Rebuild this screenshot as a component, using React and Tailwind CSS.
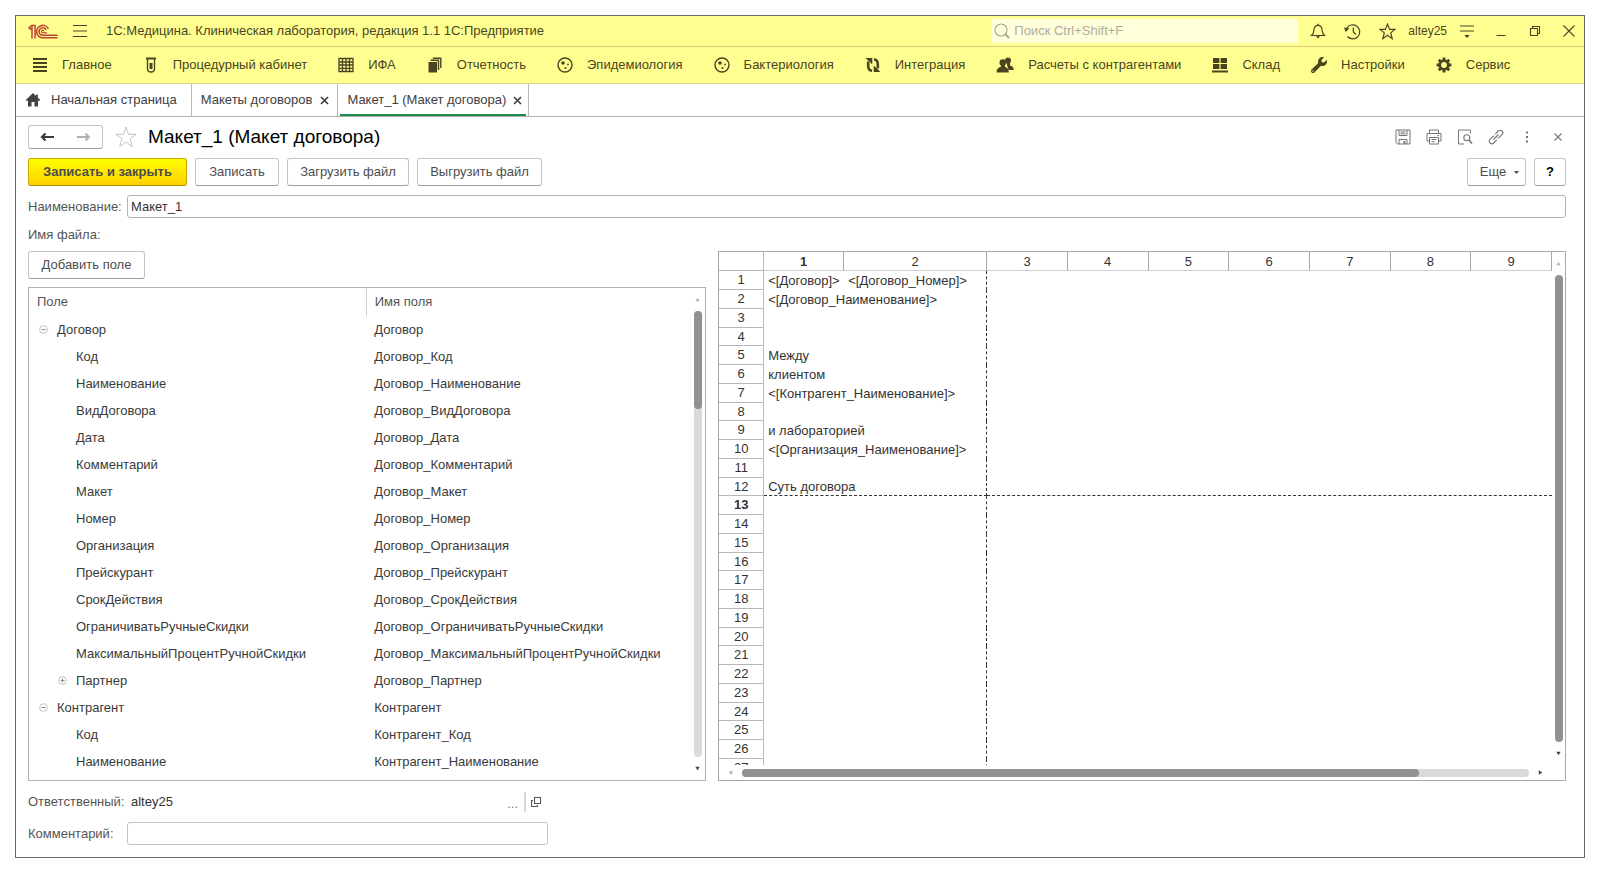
import React from "react";
import { FaWrench } from "react-icons/fa";

function Icon({ children, className = "size-4", box = "0 0 16 16" }) {
  return (
    <svg viewBox={box} className={"shrink-0 " + className} fill="none" stroke="currentColor" aria-hidden="true">
      {children}
    </svg>
  );
}

const Logo = () => (
  <svg viewBox="0 0 30 15" className="h-[15px] w-[30px] shrink-0 text-[#bf4430]" fill="none" stroke="currentColor" aria-label="1С">
    <path d="M0.4 4.4 L3.6 1.4 H7 V14.5 M1.6 5.6 L4 3.8 V14.5" strokeWidth="1.5" />
    <path d="M20.4 5 A6.2 6.2 0 1 0 15 13.8 H29.5" strokeWidth="1.6" />
    <path d="M18 5.8 A3.7 3.7 0 1 0 15 11.3 H29.5" strokeWidth="1.5" />
    <path d="M16 7 A1.3 1.3 0 1 0 15 8.9 H19" strokeWidth="1.2" />
  </svg>
);

const Burger = () => (
  <Icon><path d="M1 2.5H15M1 8H15M1 13.5H15" strokeWidth="1.2" /></Icon>
);
const Home = () => (
  <Icon>
    <path d="M8 1L0.8 8L2 9.2L3 8.3V14.5H6.5V10H9.5V14.5H13V8.3L14 9.2L15.2 8L12.8 5.6V2.5H11V3.9Z" fill="currentColor" stroke="none" />
  </Icon>
);
const Lines = () => (
  <Icon><path d="M1 2H15M1 6H15M1 10H15M1 14H15" strokeWidth="2" /></Icon>
);
const Tube = () => (
  <Icon>
    <path d="M3 1.5H13" strokeWidth="2" />
    <path d="M4.5 2V12A3.5 3 0 0 0 11.5 12V2" strokeWidth="1.4" />
    <path d="M6.5 6H9.5V12H6.5Z" fill="currentColor" stroke="none" />
  </Icon>
);
const GridIcon = () => (
  <Icon>
    <path d="M1 1.5H15V14.5H1ZM4.5 1V15M8 1V15M11.5 1V15M1 5H15M1 8H15M1 11.3H15" strokeWidth="1.3" />
  </Icon>
);
const Books = () => (
  <Icon>
    <path d="M1.5 5H10V15.5H1.5Z" fill="currentColor" stroke="none" />
    <path d="M3.5 3.3H11.5V13M5.8 1.3H13.8V11" strokeWidth="1.4" />
  </Icon>
);
const Petri = () => (
  <Icon>
    <circle cx="8" cy="8" r="7" strokeWidth="1.4" />
    <circle cx="6" cy="6" r="1.8" fill="currentColor" stroke="none" />
    <circle cx="11" cy="7.5" r="0.9" fill="currentColor" stroke="none" />
    <circle cx="8.5" cy="11" r="1" fill="currentColor" stroke="none" />
  </Icon>
);
const Sync = () => (
  <Icon>
    <path d="M7 13.8Q3.2 13.2 3.2 9V4.5M9 2.2Q12.8 2.8 12.8 7V11.5" strokeWidth="2.6" />
    <path d="M0.5 1H7.3V7.5ZM15.5 15H8.7V8.5Z" fill="currentColor" stroke="none" />
  </Icon>
);
const People = () => (
  <Icon className="h-4 w-[18px]" box="0 0 18 16">
    <g fill="currentColor" stroke="none">
      <circle cx="12" cy="3.4" r="3" />
      <path d="M10.5 6H14V8.5Q17.7 9 17.7 13H12.5Z" />
      <circle cx="6.8" cy="5.6" r="3.3" />
      <path d="M0.5 15.5Q0.5 10.5 4.8 10V8H9V10Q12.8 10.5 12.8 15.5Z" />
    </g>
  </Icon>
);
const Blocks = () => (
  <Icon>
    <path d="M1 1H7.4V6H1ZM8.6 1H15V6H8.6ZM1 7H7.4V12H1ZM8.6 7H15V12H8.6ZM0 13.5H16V15.5H0Z" fill="currentColor" stroke="none" />
  </Icon>
);
const Gear = () => (
  <Icon>
    <circle cx="8" cy="8" r="4.3" strokeWidth="2.8" />
    <path d="M8 0.6V3M8 13V15.4M0.6 8H3M13 8H15.4M2.8 2.8L4.4 4.4M11.6 11.6L13.2 13.2M13.2 2.8L11.6 4.4M4.4 11.6L2.8 13.2" strokeWidth="2.8" />
  </Icon>
);
const Wrench = () => <FaWrench className="size-4 shrink-0" />;

const NAV = [
  ["Главное", Lines],
  ["Процедурный кабинет", Tube],
  ["ИФА", GridIcon],
  ["Отчетность", Books],
  ["Эпидемиология", Petri],
  ["Бактериология", Petri],
  ["Интеграция", Sync],
  ["Расчеты с контрагентами", People],
  ["Склад", Blocks],
  ["Настройки", Wrench],
  ["Сервис", Gear],
];

const FIELDS = [
  [0, "-", "Договор", "Договор"],
  [1, "", "Код", "Договор_Код"],
  [1, "", "Наименование", "Договор_Наименование"],
  [1, "", "ВидДоговора", "Договор_ВидДоговора"],
  [1, "", "Дата", "Договор_Дата"],
  [1, "", "Комментарий", "Договор_Комментарий"],
  [1, "", "Макет", "Договор_Макет"],
  [1, "", "Номер", "Договор_Номер"],
  [1, "", "Организация", "Договор_Организация"],
  [1, "", "Прейскурант", "Договор_Прейскурант"],
  [1, "", "СрокДействия", "Договор_СрокДействия"],
  [1, "", "ОграничиватьРучныеСкидки", "Договор_ОграничиватьРучныеСкидки"],
  [1, "", "МаксимальныйПроцентРучнойСкидки", "Договор_МаксимальныйПроцентРучнойСкидки"],
  [1, "+", "Партнер", "Договор_Партнер"],
  [0, "-", "Контрагент", "Контрагент"],
  [1, "", "Код", "Контрагент_Код"],
  [1, "", "Наименование", "Контрагент_Наименование"],
];

const CELLS = {
  1: ["<[Договор]>", "<[Договор_Номер]>"],
  2: ["<[Договор_Наименование]>"],
  5: ["Между"],
  6: ["клиентом"],
  7: ["<[Контрагент_Наименование]>"],
  9: ["и лабораторией"],
  10: ["<[Организация_Наименование]>"],
  12: ["Суть договора"],
};
const ROWS = Array.from({ length: 27 }, (_, i) => i + 1);

function Toggle({ sign }) {
  return (
    <button type="button" aria-label={sign === "+" ? "Развернуть" : "Свернуть"} className="shrink-0 text-[#8a8a8a]">
      <Icon className="size-[9px]" box="0 0 9 9">
        <circle cx="4.5" cy="4.5" r="3.9" strokeWidth="0.5" />
        <path d={sign === "+" ? "M2.5 4.5H6.5M4.5 2.5V6.5" : "M2.5 4.5H6.5"} strokeWidth="1" />
      </Icon>
    </button>
  );
}

function Arrow({ dir, faint }) {
  const d = { up: "M4 2L6.5 6H1.5Z", down: "M1.5 2H6.5L4 6Z", left: "M6 1.5V6.5L2 4Z", right: "M2 1.5V6.5L6 4Z" }[dir];
  return (
    <svg viewBox="0 0 8 8" aria-hidden="true" className={"size-[7px] shrink-0 " + (faint ? "text-[#b5b5b5]" : "text-[#444]")}>
      <path d={d} fill="currentColor" />
    </svg>
  );
}

function Btn({ children, className = "", ...rest }) {
  return (
    <button
      type="button"
      className={"flex h-7 shrink-0 items-center justify-center rounded-[3px] border border-[#c4c4c4] border-b-[#a0a0a0] bg-white whitespace-nowrap text-[#4d4d4d] " + className}
      {...rest}
    >
      {children}
    </button>
  );
}

function TitleBar() {
  return (
    <header className="flex h-[31px] shrink-0 items-center border-b border-[#dcc878] bg-[#ffff91] pr-[7px] pl-3 text-[#4a4420]">
      <Logo />
      <button type="button" aria-label="Меню" className="ml-3.5"><Burger /></button>
      <h1 className="ml-[18px] text-[13px] whitespace-nowrap">1С:Медицина. Клиническая лаборатория, редакция 1.1 1С:Предприятие</h1>
      <label className="ml-auto flex h-6 w-[306px] items-center gap-1 bg-[#ffffdc] px-0.5 text-[#a8a294]">
        <Icon><circle cx="7" cy="7" r="6" strokeWidth="1.1" /><path d="M11.5 11.5L15 15" strokeWidth="1.8" /></Icon>
        <input aria-label="Поиск" placeholder="Поиск Ctrl+Shift+F" className="min-w-0 flex-1 bg-transparent text-[13px] outline-none placeholder:text-[#b3ab9c]" />
      </label>
      <div className="ml-3 flex items-center gap-[18px]">
        <button type="button" aria-label="Уведомления">
          <Icon><path d="M1.5 12.5H14.5C12 10.5 12.3 8.5 12 6.5C11.6 3.6 10 2.4 8 2.4S4.4 3.6 4 6.5C3.7 8.5 4 10.5 1.5 12.5Z" strokeWidth="1.2" /><path d="M8 0.8V2.4" strokeWidth="1.4" /><path d="M5.8 13.2H10.2L8 15.6Z" fill="currentColor" stroke="none" /></Icon>
        </button>
        <button type="button" aria-label="История">
          <Icon className="size-[17px]" box="0 0 17 17"><path d="M2.6 5.5A7 7 0 1 1 3.5 13.5" strokeWidth="1.2" /><path d="M9.3 4.5V9L12 11.5" strokeWidth="1.2" /><path d="M0 4.5L5.3 5.2L1.8 9Z" fill="currentColor" stroke="none" /></Icon>
        </button>
        <button type="button" aria-label="Избранное">
          <Icon className="size-[17px]"><path d="M8 1L10 6H15L11 9.3L12.5 14.8L8 11.6L3.5 14.8L5 9.3L1 6H6Z" strokeWidth="1.1" /></Icon>
        </button>
      </div>
      <span className="ml-3 text-xs">altey25</span>
      <div className="ml-3 flex items-center gap-[18px]">
        <button type="button" aria-label="Настройки окна"><Icon><path d="M1 3H15M1 8H15" strokeWidth="1.2" /><path d="M5.3 12H10.7L8 15Z" fill="currentColor" stroke="none" /></Icon></button>
        <button type="button" aria-label="Свернуть окно"><Icon><path d="M3.5 12.5H12.5" strokeWidth="1.1" /></Icon></button>
        <button type="button" aria-label="Восстановить окно"><Icon><path d="M3.5 5.5H10.5V12.5H3.5ZM5.5 5V3.5H12.5V10.5H11" strokeWidth="1.1" /></Icon></button>
        <button type="button" aria-label="Закрыть окно"><Icon><path d="M2.5 2.5L13.5 13.5M13.5 2.5L2.5 13.5" strokeWidth="1.1" /></Icon></button>
      </div>
    </header>
  );
}

function NavBar() {
  return (
    <nav className="flex h-[37px] shrink-0 items-center gap-[31px] overflow-hidden border-b border-[#d9d48c] bg-[#ffff91] px-4 text-[13px] text-[#4a4420]">
      {NAV.map(([label, Glyph]) => (
        <a key={label} href="#" className="flex items-center gap-3.5 whitespace-nowrap">
          <Glyph />
          {label}
        </a>
      ))}
    </nav>
  );
}

const CloseX = () => (
  <Icon className="size-[9px]" box="0 0 9 9"><path d="M1 1L8 8M8 1L1 8" strokeWidth="1.7" /></Icon>
);

function Tabs() {
  return (
    <div className="flex h-[33px] shrink-0 border-b border-[#b0b0b0] text-[13px] whitespace-nowrap text-[#404040]">
      <a href="#" className="flex items-center gap-2.5 border-r border-[#b8b8b8] pr-3.5 pl-[9px]">
        <Home />
        Начальная страница
      </a>
      <div className="flex items-center gap-2 border-r border-[#b8b8b8] pr-2 pl-[9px]">
        <a href="#">Макеты договоров</a>
        <button type="button" aria-label="Закрыть Макеты договоров"><CloseX /></button>
      </div>
      <div className="flex border-r border-[#b8b8b8] px-0.5">
        <div className="flex items-center gap-[7px] border-b-2 border-[#1c8a4c] pt-0.5 pr-1 pl-[7px]">
          <a href="#" aria-current="page">Макет_1 (Макет договора)</a>
          <button type="button" aria-label="Закрыть Макет_1"><CloseX /></button>
        </div>
      </div>
    </div>
  );
}

function Heading() {
  return (
    <div className="flex h-6 items-center">
      <div className="flex h-6 w-[75px] shrink-0 rounded-[3px] border border-[#c4c4c4] border-b-[#a0a0a0]">
        <button type="button" aria-label="Назад" className="flex flex-1 items-center justify-center text-[#3c3c3c]">
          <Icon><path d="M15 8H3M6.5 4.5L3 8L6.5 11.5" strokeWidth="2.2" /></Icon>
        </button>
        <button type="button" aria-label="Вперед" className="flex flex-1 items-center justify-center text-[#b0b0b0]">
          <Icon><path d="M1 8H13M9.5 4.5L13 8L9.5 11.5" strokeWidth="1.8" /></Icon>
        </button>
      </div>
      <button type="button" aria-label="В избранное" className="ml-3 text-[#b4b4b4]">
        <Icon className="size-[22px]" box="0 0 22 22"><path d="M11 1L13.6 8.3H21L15.1 12.8L17.3 20.5L11 16L4.7 20.5L6.9 12.8L1 8.3H8.4Z" strokeWidth="0.8" /></Icon>
      </button>
      <h2 className="ml-[11px] text-[19px] leading-6 whitespace-nowrap text-black">Макет_1 (Макет договора)</h2>
      <div className="ml-auto flex items-center gap-[15px] text-[#767676]">
        <button type="button" aria-label="Сохранить">
          <Icon><path d="M1 1H15V15H2.5L1 13.5ZM4 1V6.5H12V1M5.5 3H10.5M5.5 4.8H10.5M4 15V10.5H12V15" strokeWidth="1" /><path d="M8.5 12H10.5V15H8.5Z" fill="currentColor" stroke="none" /></Icon>
        </button>
        <button type="button" aria-label="Печать">
          <Icon><path d="M3.5 4.5V1H12.5V4.5M3.5 12H1V4.5H15V12H12.5M3.5 8.5H12.5V15H3.5ZM5.5 10.5H10.5M5.5 12.8H8.5M11.5 6.5H13" strokeWidth="1" /></Icon>
        </button>
        <button type="button" aria-label="Предварительный просмотр">
          <Icon><path d="M7 15H1.5V1H13.5V4.5" strokeWidth="1" /><circle cx="9.8" cy="8.8" r="3" strokeWidth="1.1" /><path d="M12 11L15 14.5" strokeWidth="1.7" /></Icon>
        </button>
        <button type="button" aria-label="Ссылка">
          <Icon><path d="M5.5 10.5L10.5 5.5M7.2 5.2L10.3 2A2.6 2.6 0 0 1 14 5.7L11.5 8.2A2.6 2.6 0 0 1 9.5 9M8.8 10.8L5.7 14A2.6 2.6 0 0 1 2 10.3L4.5 7.8A2.6 2.6 0 0 1 6.5 7" strokeWidth="1.1" /></Icon>
        </button>
        <button type="button" aria-label="Действия">
          <Icon><path d="M7 2.5H9V4.5H7ZM7 7H9V9H7ZM7 11.5H9V13.5H7Z" fill="currentColor" stroke="none" /></Icon>
        </button>
        <button type="button" aria-label="Закрыть">
          <Icon><path d="M4.5 4.5L11.5 11.5M11.5 4.5L4.5 11.5" strokeWidth="1.1" /></Icon>
        </button>
      </div>
    </div>
  );
}

function FieldTree() {
  return (
    <section className="flex min-h-0 flex-1 border border-[#b0b0b0]">
      <div className="min-w-0 flex-1 overflow-hidden">
        <table className="w-full table-fixed text-left whitespace-nowrap text-[#3a3a3a]">
          <thead className="text-[#555]">
            <tr className="h-7">
              <th className="w-[51%] border-r border-[#d0d0d0] pl-2 font-normal">Поле</th>
              <th className="w-[49%] pl-2 font-normal">Имя поля</th>
            </tr>
          </thead>
          <tbody>
            {FIELDS.map(([level, sign, name, full], i) => (
              <tr key={i} className="h-[27px]">
                <td className={level ? "pl-[29px]" : "pl-2.5"}>
                  <div className={"flex items-center " + (sign ? "gap-[9px]" : "pl-[18px]")}>
                    {sign && <Toggle sign={sign} />}
                    {name}
                  </div>
                </td>
                <td className="pl-2">{full}</td>
              </tr>
            ))}
          </tbody>
        </table>
      </div>
      <div className="flex w-[15px] flex-col items-center pt-2 pb-2">
        <Arrow dir="up" faint />
        <div className="my-2 w-2 flex-1 rounded-full bg-[#dadada]">
          <div className="h-[22%] rounded-full bg-[#919191]" />
        </div>
        <Arrow dir="down" />
      </div>
    </section>
  );
}

function Sheet() {
  return (
    <section className="flex min-h-0 min-w-0 flex-col border border-[#a8a8a8]">
      <div className="flex min-h-0 flex-1">
        <div className="min-w-0 flex-1 overflow-hidden">
          <table className="w-full table-fixed border-separate border-spacing-0 whitespace-nowrap text-[#333]">
            <colgroup>
              <col className="w-[45px]" />
              <col className="w-[80px]" />
              <col className="w-[143px]" />
              <col /><col /><col /><col /><col /><col /><col />
            </colgroup>
            <thead>
              <tr className="h-[19px]">
                <th className="border-r border-b border-[#b8b8b8]" aria-label="Строка" />
                {[1, 2, 3, 4, 5, 6, 7, 8, 9].map((c) => (
                  <th key={c} className={"border-r border-b border-r-[#a8a8a8] border-b-[#cfcfcf] p-0 pt-0.5 text-[13px] leading-4 " + (c === 1 ? "font-bold" : "font-normal")}>{c}</th>
                ))}
              </tr>
            </thead>
            <tbody>
              {ROWS.map((r) => {
                const text = CELLS[r] || [];
                const line = r === 12 ? " border-b border-dashed border-b-[#333]" : "";
                return (
                  <tr key={r} className={r % 4 === 0 ? "h-[18px]" : "h-[19px]"}>
                    <th className={"border-r border-b border-[#b8b8b8] p-0 text-[13px] leading-4 " + (r === 13 ? "font-bold" : "font-normal")}>{r}</th>
                    <td className={"p-0 pl-1 text-[13px] leading-4" + line}>{text[0]}</td>
                    <td className={"border-r border-dashed border-r-[#333] p-0 pl-1 text-[13px] leading-4" + line}>{text[1]}</td>
                    <td colSpan={7} className={"p-0" + line} />
                  </tr>
                );
              })}
            </tbody>
          </table>
        </div>
        <div className="flex w-[13px] flex-col items-center pt-2">
          <Arrow dir="up" faint />
          <div className="my-2 w-2 flex-1 rounded-full bg-[#919191]" />
          <Arrow dir="down" />
          <div className="h-2" />
        </div>
      </div>
      <div className="flex h-[15px] items-center pr-[21px] pl-2">
        <Arrow dir="left" faint />
        <div className="mx-2 h-2 flex-1 rounded-full bg-[#dadada]">
          <div className="h-full w-[86%] rounded-full bg-[#919191]" />
        </div>
        <Arrow dir="right" />
      </div>
    </section>
  );
}

export default function App() {
  return (
    <div className="h-screen bg-white p-[15px] font-['Liberation_Sans',Arial,sans-serif] text-[13px] leading-4">
      <div className="flex h-full flex-col border border-[#6a6a6a] bg-white">
        <TitleBar />
        <NavBar />
        <Tabs />
        <main className="flex min-h-0 flex-1 flex-col pt-2 pr-[18px] pb-3 pl-3">
          <Heading />
          <div className="mt-[9px] flex gap-2">
            <Btn className="w-[159px] border-[#c9a800] border-b-[#a88c00] bg-linear-to-b from-[#ffff00] to-[#ffd000] font-bold text-[#4a4000]">Записать и закрыть</Btn>
            <Btn className="w-[84px] border-[#999]">Записать</Btn>
            <Btn className="w-[122px]">Загрузить файл</Btn>
            <Btn className="w-[125px]">Выгрузить файл</Btn>
            <Btn className="ml-auto w-[59px] gap-2 pl-1.5">Еще <Icon className="size-[5px]" box="0 0 5 5"><path d="M0 1H5L2.5 4Z" fill="currentColor" stroke="none" /></Icon></Btn>
            <Btn aria-label="Справка" className="w-8 font-bold text-black">?</Btn>
          </div>
          <div className="mt-[9px] flex h-[23px] items-center">
            <label htmlFor="name" className="w-[99px] shrink-0 text-[#555]">Наименование:</label>
            <input id="name" defaultValue="Макет_1" className="h-full min-w-0 flex-1 rounded-[3px] border border-[#b4b4b4] px-[3px] text-[#333] outline-none" />
          </div>
          <p className="mt-[9px] text-[#555]">Имя файла:</p>
          <div className="mt-2 grid min-h-0 flex-1 grid-cols-[4fr_5fr] grid-rows-[minmax(0,1fr)] gap-3">
            <div className="flex min-h-0 min-w-0 flex-col gap-2">
              <Btn className="w-[117px]">Добавить поле</Btn>
              <FieldTree />
            </div>
            <Sheet />
          </div>
          <div className="mt-[9px] flex h-[23px] w-[520px] items-center">
            <span className="w-[103px] text-[#555]">Ответственный:</span>
            <span className="flex-1 text-[#333]">altey25</span>
            <button type="button" aria-label="Выбрать" className="px-1.5 pt-1 text-[#777]">...</button>
            <button type="button" aria-label="Открыть" className="border-l-2 border-[#d8d8d8] py-1 pr-1.5 pl-1 text-[#555]">
              <Icon className="size-3" box="0 0 12 12"><path d="M4.5 1.5H10.5V7.5H4.5ZM3 4.5H1.5V10.5H7.5V9" strokeWidth="1.1" /></Icon>
            </button>
          </div>
          <div className="mt-[9px] flex h-[23px] w-[520px] items-center">
            <label htmlFor="comment" className="w-[99px] shrink-0 text-[#555]">Комментарий:</label>
            <input id="comment" className="h-full min-w-0 flex-1 rounded-[3px] border border-[#c4c4c4] px-[3px] outline-none" />
          </div>
        </main>
      </div>
    </div>
  );
}
